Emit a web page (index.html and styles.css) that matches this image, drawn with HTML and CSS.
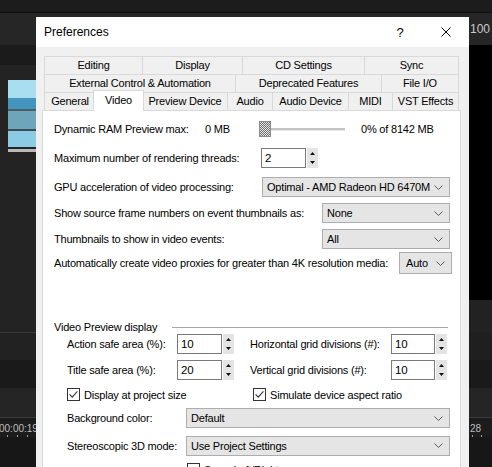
FILE: index.html
```html
<!DOCTYPE html>
<html lang="en">
<head>
<meta charset="utf-8">
<title>Preferences</title>
<link rel="stylesheet" href="styles.css">
</head>
<body>
<div class="desktop">
  <div class="track track-main">
    <div class="b-top"></div>
    <div class="b-toolbar"></div>
    <div class="b-header"></div>
    <div class="b-tracks">
      <div class="clip">
        <div class="c1"></div><div class="c2"></div><div class="c3"></div><div class="c4"></div><div class="c5"></div><div class="c6"></div><div class="c7"></div>
      </div>
    </div>
    <div class="b-lane"></div>
    <div class="b-lane-dark"></div>
    <div class="b-lane2"></div>
    <div class="b-ruler">
      <span class="timecode tc-left">00:00:19;</span>
      <div class="ticks ticks-left"><i></i><i></i><i></i></div>
    </div>
    <div class="b-bottom"></div>
  </div>
  <div class="track track-side">
    <div class="b-top"></div>
    <div class="b-toolbar"><span class="zoomlevel">100</span></div>
    <div class="b-viewer"></div>
    <div class="b-side-bar"></div>
    <div class="b-lane"></div>
    <div class="b-lane-dark"></div>
    <div class="b-lane2"></div>
    <div class="b-ruler">
      <span class="timecode tc-right">28</span>
      <div class="ticks ticks-right"><i></i><i></i></div>
    </div>
    <div class="b-bottom"></div>
  </div>
</div>

<div class="dialog">
  <div class="titlebar">
    <span class="title">Preferences</span>
    <span class="cap-btn help">?</span>
    <span class="cap-btn"><svg width="10" height="10" viewBox="0 0 10 10"><path d="M0.5 0.5L9.5 9.5M9.5 0.5L0.5 9.5" stroke="#000" stroke-width="1"/></svg></span>
  </div>
  <div class="dlg-body">
    <div class="tabs">
      <div class="tab-row row-a">
        <div class="tab">Editing</div>
        <div class="tab">Display</div>
        <div class="tab">CD Settings</div>
        <div class="tab last">Sync</div>
      </div>
      <div class="tab-row row-b">
        <div class="tab">External Control &amp; Automation</div>
        <div class="tab">Deprecated Features</div>
        <div class="tab last">File I/O</div>
      </div>
      <div class="tab-row row-c">
        <div class="tab">General</div>
        <div class="tab selected">Video</div>
        <div class="tab">Preview Device</div>
        <div class="tab">Audio</div>
        <div class="tab">Audio Device</div>
        <div class="tab">MIDI</div>
        <div class="tab last">VST Effects</div>
      </div>
    </div>

    <div class="pane">
      <div class="row r1">
        <span class="lbl w-ram">Dynamic RAM Preview max:</span>
        <span class="lbl w-mb">0 MB</span>
        <div class="slider"><span class="knob"></span><span class="rail"></span></div>
        <span class="lbl">0% of 8142 MB</span>
      </div>
      <div class="row r2">
        <span class="lbl w-threads">Maximum number of rendering threads:</span>
        <span class="field">2</span>
        <span class="spin"><svg width="11" height="20" viewBox="0 0 11 20"><path d="M3 7h5L5.5 4z M3 13h5L5.5 16z" fill="#111"/></svg></span>
      </div>
      <div class="row r3">
        <span class="lbl w-gpu">GPU acceleration of video processing:</span>
        <span class="combo c-gpu"><span class="combo-text">Optimal - AMD Radeon HD 6470M</span><svg class="chev" width="9" height="5" viewBox="0 0 9 5"><path d="M0.5 0.5L4.5 4.5L8.5 0.5" fill="none" stroke="#5a5a5a"/></svg></span>
      </div>
      <div class="row r4">
        <span class="lbl w-frames">Show source frame numbers on event thumbnails as:</span>
        <span class="combo c-mid"><span class="combo-text">None</span><svg class="chev" width="9" height="5" viewBox="0 0 9 5"><path d="M0.5 0.5L4.5 4.5L8.5 0.5" fill="none" stroke="#5a5a5a"/></svg></span>
      </div>
      <div class="row r5">
        <span class="lbl w-frames">Thumbnails to show in video events:</span>
        <span class="combo c-mid"><span class="combo-text">All</span><svg class="chev" width="9" height="5" viewBox="0 0 9 5"><path d="M0.5 0.5L4.5 4.5L8.5 0.5" fill="none" stroke="#5a5a5a"/></svg></span>
      </div>
      <div class="row r6">
        <span class="lbl w-proxy">Automatically create video proxies for greater than 4K resolution media:</span>
        <span class="combo c-auto"><span class="combo-text">Auto</span><svg class="chev" width="9" height="5" viewBox="0 0 9 5"><path d="M0.5 0.5L4.5 4.5L8.5 0.5" fill="none" stroke="#5a5a5a"/></svg></span>
      </div>

      <div class="group-title">
        <span class="lbl w-group">Video Preview display</span>
        <span class="group-line"></span>
      </div>
      <div class="group">
        <div class="pair">
          <div class="row gr">
            <span class="lbl w-safe">Action safe area (%):</span>
            <span class="field">10</span>
            <span class="spin"><svg width="11" height="20" viewBox="0 0 11 20"><path d="M3 7h5L5.5 4z M3 13h5L5.5 16z" fill="#111"/></svg></span>
          </div>
          <div class="row gr">
            <span class="lbl w-grid">Horizontal grid divisions (#):</span>
            <span class="field f-grid">10</span>
            <span class="spin"><svg width="11" height="20" viewBox="0 0 11 20"><path d="M3 7h5L5.5 4z M3 13h5L5.5 16z" fill="#111"/></svg></span>
          </div>
          <div class="row gr">
            <span class="lbl w-safe">Title safe area (%):</span>
            <span class="field">20</span>
            <span class="spin"><svg width="11" height="20" viewBox="0 0 11 20"><path d="M3 7h5L5.5 4z M3 13h5L5.5 16z" fill="#111"/></svg></span>
          </div>
          <div class="row gr">
            <span class="lbl w-grid">Vertical grid divisions (#):</span>
            <span class="field f-grid">10</span>
            <span class="spin"><svg width="11" height="20" viewBox="0 0 11 20"><path d="M3 7h5L5.5 4z M3 13h5L5.5 16z" fill="#111"/></svg></span>
          </div>
          <label class="check">
            <svg width="13" height="13" viewBox="0 0 13 13"><rect x="0.5" y="0.5" width="12" height="12" fill="#fff" stroke="#333"/><path d="M2.6 6.4L5.2 9.2L10.4 3.4" fill="none" stroke="#333" stroke-width="1.1"/></svg>
            <span>Display at project size</span>
          </label>
          <label class="check check-right">
            <svg width="13" height="13" viewBox="0 0 13 13"><rect x="0.5" y="0.5" width="12" height="12" fill="#fff" stroke="#333"/><path d="M2.6 6.4L5.2 9.2L10.4 3.4" fill="none" stroke="#333" stroke-width="1.1"/></svg>
            <span>Simulate device aspect ratio</span>
          </label>
        </div>

        <div class="row r-bg">
          <span class="lbl w-bg">Background color:</span>
          <span class="combo c-wide"><span class="combo-text">Default</span><svg class="chev" width="9" height="5" viewBox="0 0 9 5"><path d="M0.5 0.5L4.5 4.5L8.5 0.5" fill="none" stroke="#5a5a5a"/></svg></span>
        </div>
        <div class="row r-stereo">
          <span class="lbl w-bg">Stereoscopic 3D mode:</span>
          <span class="combo c-wide"><span class="combo-text">Use Project Settings</span><svg class="chev" width="9" height="5" viewBox="0 0 9 5"><path d="M0.5 0.5L4.5 4.5L8.5 0.5" fill="none" stroke="#5a5a5a"/></svg></span>
        </div>
        <label class="check check-swap">
          <svg width="13" height="13" viewBox="0 0 13 13"><rect x="0.5" y="0.5" width="12" height="12" fill="#fff" stroke="#333"/></svg>
          <span>Swap Left/Right</span>
        </label>
      </div>
    </div>
  </div>
</div>
</body>
</html>
```

FILE: styles.css
```css
* { box-sizing: border-box; }

html, body {
  margin: 0;
  width: 492px;
  height: 467px;
  overflow: hidden;
  background: #1a1a1a;
}

body {
  font-family: "Liberation Sans", Arial, sans-serif;
  position: relative;
}

/* ---------- editor behind the dialog ---------- */
.desktop {
  display: flex;
  height: 467px;
}

.track {
  display: flex;
  flex-direction: column;
  height: 467px;
}

.track-main { width: 469px; }
.track-side { width: 23px; }

.b-top {
  height: 13px;
  background: #1c1c1c;
  border-bottom: 1px solid #0e0e0e;
}

.b-toolbar {
  height: 32px;
  background: #262626;
  display: flex;
  align-items: center;
}

.zoomlevel {
  font-size: 12px;
  color: #c9c9c9;
  padding-left: 1px;
  white-space: nowrap;
}

.b-header {
  height: 20px;
  background: #1b1b1b;
}

.b-tracks {
  height: 268px;
  background: #232323;
  border-bottom: 1px solid #383838;
  padding: 15px 0 0 8px;
}

.clip {
  width: 40px;
  display: flex;
  flex-direction: column;
}
.clip .c1 { height: 18px; background: #a9def1; }
.clip .c2 { height: 11px; background: #4395bd; }
.clip .c3 { height: 2px;  background: #4d5e66; }
.clip .c4 { height: 18px; background: #6fa5bb; }
.clip .c5 { height: 2px;  background: #3e4d55; }
.clip .c6 { height: 16px; background: #8ccbe4; }
.clip .c7 { height: 3px;  background: #b9b9b9; margin-top: 2px; }

.b-viewer {
  height: 255px;
  background: #000;
}

.b-side-bar {
  height: 32px;
  background: #222;
}

.b-lane {
  height: 27px;
  background: #222;
}
.track-side .b-lane { height: 28px; background: #1f1f1f; }

.b-lane-dark {
  height: 28px;
  background: #1a1a1a;
}

.b-lane2 {
  height: 29px;
  background: #252525;
}

.b-ruler {
  height: 20px;
  background: #1c1c1c;
  border-top: 1px solid #3a3a3a;
  display: flex;
  flex-direction: column;
  padding-top: 5px;
}

.timecode {
  font-size: 10px;
  line-height: 11px;
  color: #bcbcbc;
  white-space: nowrap;
}
.tc-left { margin-left: -1px; }
.tc-right { margin-left: 1px; }

.ticks {
  display: flex;
  height: 3px;
  margin-top: 1px;
}
.ticks i {
  display: block;
  width: 1px;
  height: 3px;
  background: #9a9a9a;
}
.ticks-left { padding-left: 7px; gap: 9px; }
.ticks-right { padding-left: 3px; gap: 8px; }

.b-bottom {
  flex: 1;
  background: #171717;
}

/* ---------- Preferences dialog ---------- */
.dialog {
  position: absolute;
  left: 36px;
  top: 17px;
  width: 433px;
  height: 460px;
  display: flex;
  flex-direction: column;
  background: #f0f0f0;
  color: #000;
  font-size: 11px;
  letter-spacing: -0.2px;
}

.titlebar {
  height: 30px;
  flex: none;
  background: #fff;
  display: flex;
  align-items: center;
  padding-left: 8px;
}

.title {
  flex: 1;
  font-size: 12px;
  letter-spacing: 0;
}

.cap-btn {
  width: 46px;
  height: 30px;
  display: flex;
  align-items: center;
  justify-content: center;
}

.help {
  font-size: 13px;
  letter-spacing: 0;
}

.dlg-body {
  flex: 1;
  display: flex;
  flex-direction: column;
  padding: 9px 8px 0 6px;
}

/* tab strip */
.tabs {
  margin: 0 2px;
}

.tab-row {
  display: grid;
  height: 18px;
}
.row-a { grid-template-columns: 98px 100px 122px 95px; }
.row-b { grid-template-columns: 191px 146px 78px; }
.row-c { grid-template-columns: 51px 47px 85px 45px 76px 44px 67px; }

.tab {
  border-top: 1px solid #d9d9d9;
  border-left: 1px solid #d9d9d9;
  background: #f0f0f0;
  display: flex;
  align-items: center;
  justify-content: center;
  white-space: nowrap;
  padding-bottom: 1px;
}
.tab.last { border-right: 1px solid #d9d9d9; }

.tab.selected {
  position: relative;
  z-index: 2;
  margin: -2px -2px -1px -2px;
  background: #fff;
  border-right: 1px solid #d9d9d9;
  padding-bottom: 2px;
}

/* page content */
.pane {
  flex: 1;
  background: #fff;
  border: 1px solid #d9d9d9;
  padding: 6px 0 0 11px;
}

.row {
  display: flex;
  align-items: center;
  height: 24px;
}
.r2 { margin-top: 5px; }
.r3 { margin-top: 5px; }
.r4 { margin-top: 2px; }
.r5 { margin-top: 2px; }

.lbl {
  white-space: nowrap;
  flex: none;
}
.w-ram { width: 151px; }
.w-mb { width: 54px; }
.w-threads { width: 207px; }
.w-gpu { width: 208px; }
.w-frames { width: 268px; }
.w-proxy { width: 345px; }

.slider {
  display: flex;
  align-items: center;
  width: 86px;
  height: 16px;
  margin-right: 16px;
}
.knob {
  width: 12px;
  height: 16px;
  border: 1px solid #8c8c8c;
  background: repeating-conic-gradient(#707070 0 25%, #e6e6e6 0 50%) 0 0 / 2px 2px;
}
.rail {
  flex: 1;
  height: 3px;
  background: #c4c4c4;
  border-bottom: 1px solid #e6e6e6;
}

.field {
  width: 45px;
  height: 20px;
  flex: none;
  border: 1px solid #7a7a7a;
  background: #fff;
  padding-left: 3px;
  font-size: 11.5px;
  line-height: 18px;
}
.f-grid { width: 44px; }

.spin {
  width: 11px;
  height: 20px;
  flex: none;
  margin-left: 1px;
  background: #e4e4e4;
  display: flex;
}

.combo {
  height: 20px;
  flex: none;
  display: flex;
  align-items: center;
  border: 1px solid #adadad;
  background: #e5e5e5;
  padding: 0 6px 0 4px;
}
.combo-text {
  flex: 1;
  white-space: nowrap;
}
.chev { flex: none; }

.c-gpu { width: 188px; }
.c-mid { width: 128px; }
.c-auto { width: 53px; height: 22px; padding-left: 6px; }
.c-wide { width: 264px; }

/* group box */
.group-title {
  display: flex;
  align-items: center;
  height: 14px;
  margin-top: 45px;
}
.w-group { width: 118px; }
.group-line {
  width: 276px;
  height: 1px;
  background: #a8a8a8;
}

.group {
  padding-left: 13px;
}

.pair {
  display: grid;
  grid-template-columns: 183px 198px;
  row-gap: 6px;
}

.gr { height: 20px; }
.w-safe { width: 110px; }
.w-grid { width: 141px; }

.check {
  display: flex;
  align-items: center;
  gap: 4px;
  height: 13px;
  margin-top: 2px;
  white-space: nowrap;
}
.check svg { flex: none; }
.check-right { padding-left: 3px; }

.r-bg { height: 20px; margin-top: 7px; }
.r-stereo { height: 21px; margin-top: 7px; }
.w-bg { width: 119px; }

.check-swap {
  margin-top: 7px;
  padding-left: 120px;
}
```
